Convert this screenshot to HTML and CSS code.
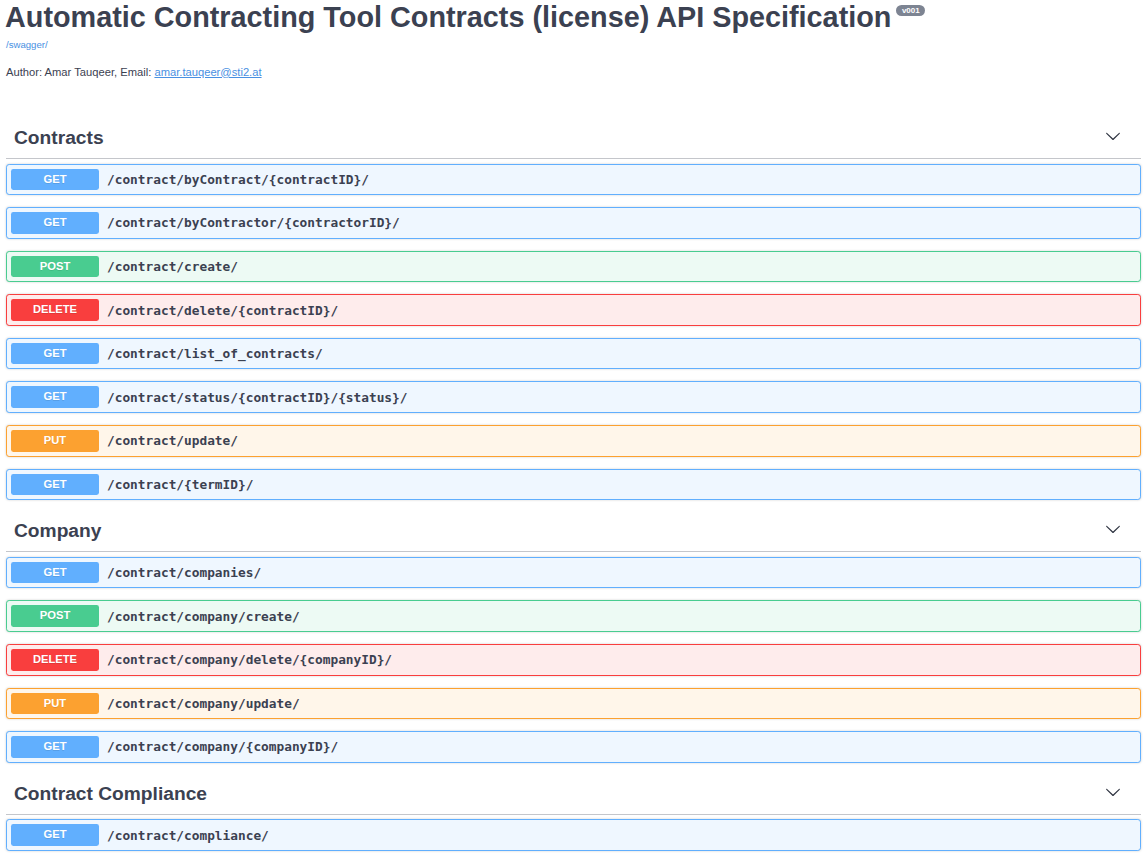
FILE: index.html
```html
<!DOCTYPE html>
<html lang="en">
<head>
<meta charset="utf-8">
<title>Automatic Contracting Tool Contracts (license) API Specification</title>
<link rel="stylesheet" href="styles.css">
</head>
<body>
<div class="wrapper">
  <div class="info">
    <h2 class="title">Automatic Contracting Tool Contracts (license) API Specification<span class="version">v001</span></h2>
    <a class="base-url" href="#">/swagger/</a>
    <p class="desc">Author: Amar Tauqeer, Email: <a href="#">amar.tauqeer@sti2.at</a></p>
  </div>

  <section class="tag-section">
    <h3 class="tag"><span class="tag-name">Contracts</span>
      <svg class="arrow" width="16" height="16" viewBox="0 0 20 20"><path d="M17.418 6.109c.272-.268.709-.268.979 0s.271.701 0 .969l-7.908 7.83c-.27.268-.707.268-.979 0l-7.908-7.830c-.27-.268-.27-.701 0-.969.271-.268.709-.268.979 0L10 13.25l7.418-7.141z"/></svg>
    </h3>
    <div class="op get"><span class="method">GET</span><span class="path">/contract/byContract/{contractID}/</span></div>
    <div class="op get"><span class="method">GET</span><span class="path">/contract/byContractor/{contractorID}/</span></div>
    <div class="op post"><span class="method">POST</span><span class="path">/contract/create/</span></div>
    <div class="op delete"><span class="method">DELETE</span><span class="path">/contract/delete/{contractID}/</span></div>
    <div class="op get"><span class="method">GET</span><span class="path">/contract/list_of_contracts/</span></div>
    <div class="op get"><span class="method">GET</span><span class="path">/contract/status/{contractID}/{status}/</span></div>
    <div class="op put"><span class="method">PUT</span><span class="path">/contract/update/</span></div>
    <div class="op get"><span class="method">GET</span><span class="path">/contract/{termID}/</span></div>
  </section>

  <section class="tag-section">
    <h3 class="tag"><span class="tag-name">Company</span>
      <svg class="arrow" width="16" height="16" viewBox="0 0 20 20"><path d="M17.418 6.109c.272-.268.709-.268.979 0s.271.701 0 .969l-7.908 7.83c-.27.268-.707.268-.979 0l-7.908-7.83c-.27-.268-.27-.701 0-.969.271-.268.709-.268.979 0L10 13.25l7.418-7.141z"/></svg>
    </h3>
    <div class="op get"><span class="method">GET</span><span class="path">/contract/companies/</span></div>
    <div class="op post"><span class="method">POST</span><span class="path">/contract/company/create/</span></div>
    <div class="op delete"><span class="method">DELETE</span><span class="path">/contract/company/delete/{companyID}/</span></div>
    <div class="op put"><span class="method">PUT</span><span class="path">/contract/company/update/</span></div>
    <div class="op get"><span class="method">GET</span><span class="path">/contract/company/{companyID}/</span></div>
  </section>

  <section class="tag-section">
    <h3 class="tag"><span class="tag-name">Contract Compliance</span>
      <svg class="arrow" width="16" height="16" viewBox="0 0 20 20"><path d="M17.418 6.109c.272-.268.709-.268.979 0s.271.701 0 .969l-7.908 7.83c-.27.268-.707.268-.979 0l-7.908-7.83c-.27-.268-.27-.701 0-.969.271-.268.709-.268.979 0L10 13.25l7.418-7.141z"/></svg>
    </h3>
    <div class="op get"><span class="method">GET</span><span class="path">/contract/compliance/</span></div>
  </section>
</div>
</body>
</html>
```

FILE: styles.css
```css
html, body {
  margin: 0;
  padding: 0;
  background: #fff;
}

body {
  font-family: "Liberation Sans", Arial, sans-serif;
  color: #3b4151;
}

.wrapper {
  padding: 0 7px 0 6px;
}

.info {
  margin-bottom: 40.5px;
}

.title {
  margin: 0 0 0 -1px;
  padding-top: 1px;
  font-size: 28.8px;
  line-height: 33px;
  font-weight: 700;
  color: #3b4151;
}

.version {
  display: inline-block;
  vertical-align: top;
  margin: 4px 0 0 5px;
  padding: 0 5.5px;
  height: 11px;
  line-height: 11px;
  border-radius: 6px;
  background: #7d8492;
  color: #fff;
  font-size: 8px;
  font-weight: 700;
}

.base-url {
  display: block;
  margin-top: 4.5px;
  font-size: 9.6px;
  line-height: 11px;
  color: #4990e2;
  text-decoration: none;
}

.desc {
  margin: 16px 0 0;
  font-size: 11.2px;
  line-height: 13px;
  color: #3b4151;
}

.desc a {
  color: #4990e2;
  text-decoration: underline;
}

.tag-section {
  margin-bottom: 0;
}

.tag {
  display: flex;
  align-items: center;
  justify-content: space-between;
  height: 39px;
  margin: 0 0 4.5px;
  padding: 0 20px 0 8px;
  border-bottom: 1px solid #c4c6cb;
  font-size: 19.2px;
  font-weight: 700;
  color: #3b4151;
}

.tag-name {
  line-height: 24px;
  padding-bottom: 1px;
}

.arrow {
  fill: #2f3441;
  margin-bottom: 5px;
}

.op {
  display: flex;
  align-items: center;
  margin: 0 0 12px;
  padding: 4px;
  border: 1px solid;
  border-radius: 3.2px;
  box-shadow: 0 0 2.4px rgba(0, 0, 0, .19);
}

.method {
  flex: none;
  width: 88px;
  height: 21.6px;
  line-height: 21.6px;
  text-align: center;
  border-radius: 2.4px;
  font-size: 11.2px;
  font-weight: 700;
  color: #fff;
  text-shadow: 0 1px 0 rgba(0, 0, 0, .1);
}

.path {
  padding: 0 8px;
  font-family: "DejaVu Sans Mono", monospace;
  font-size: 12.8px;
  font-weight: 700;
  color: #3b4151;
}

.get { background: #eff7ff; border-color: #61affe; }
.get .method { background: #61affe; }

.post { background: #edfaf4; border-color: #49cc90; }
.post .method { background: #49cc90; }

.delete { background: #feecec; border-color: #f93e3e; }
.delete .method { background: #f93e3e; }

.put { background: #fff6ea; border-color: #fca130; }
.put .method { background: #fca130; }
```
